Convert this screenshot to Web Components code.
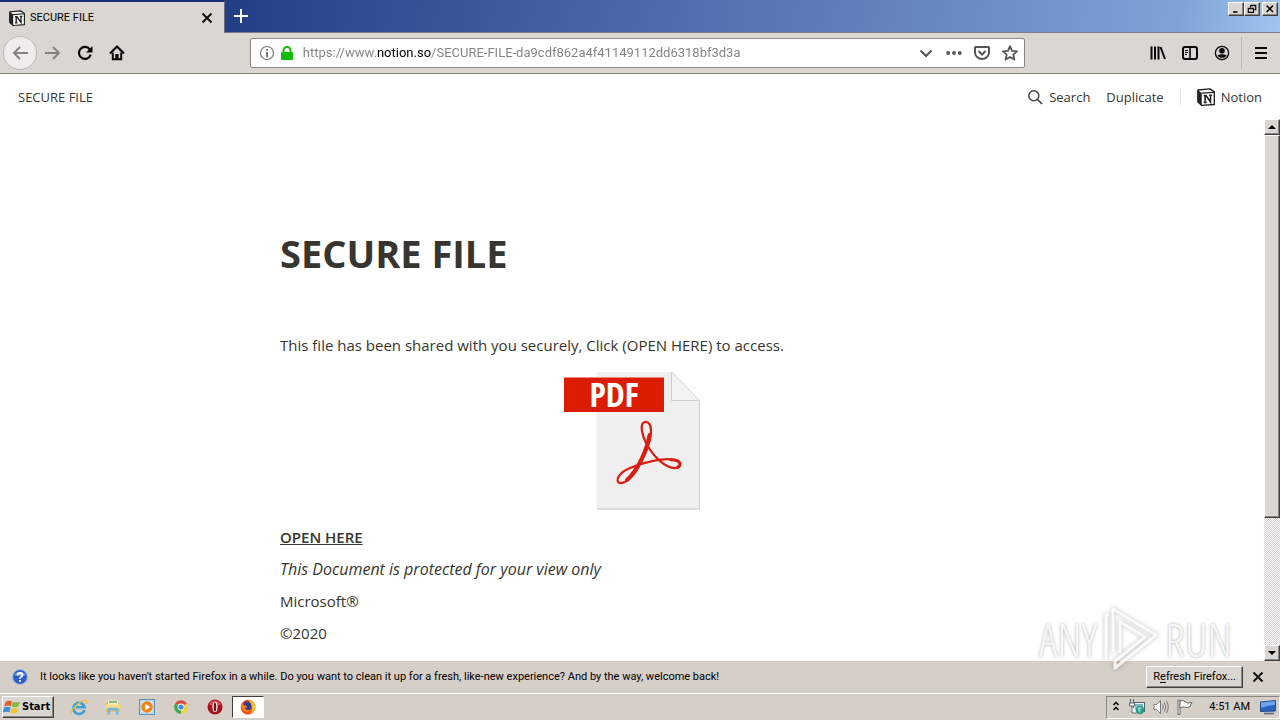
<!DOCTYPE html>
<html lang="en">
<head>
<meta charset="utf-8">
<title>SECURE FILE</title>
<style>
  html, body { height: 100%; }
  body {
    margin: 0;
    display: flex;
    flex-direction: column;
    overflow: hidden;
    background: #fff;
    color: #000;
    --face: #dad6d1;
    --ui: Roboto, "Liberation Sans", sans-serif;
    --page: "Open Sans", "Noto Sans", sans-serif;
    font: 11px/16px var(--ui);
  }
  notion-page { flex: 1; min-height: 0; }
</style>
</head>
<body>
<tab-strip>SECURE FILE</tab-strip>
<browser-toolbar></browser-toolbar>
<notion-topbar>SECURE FILE</notion-topbar>
<notion-page>
  <span slot="title">SECURE FILE</span>
  <span slot="intro">This file has been shared with you securely, Click (OPEN HERE) to access.</span>
  <span slot="link">OPEN HERE</span>
  <span slot="note">This Document is protected for your view only</span>
  <span slot="brand">Microsoft®</span>
  <span slot="year">©2020</span>
</notion-page>
<notice-bar>It looks like you haven't started Firefox in a while. Do you want to clean it up for a fresh, like-new experience? And by the way, welcome back!</notice-bar>
<task-bar></task-bar>
<water-mark></water-mark>

<script>
"use strict";
const ICONS = {
    notion: `<path d="M.7 1.8 11.5 .8 15.4 3.4V14.7L4.2 15.5.7 12.2Z" fill="#fff" stroke="#222" stroke-width="1.2" stroke-linejoin="round"/><path d="M.7 1.8 4.2 4.6V15.5L.7 12.2Z" fill="#222"/><path d="M4 4.6 15.4 3.8" stroke="#222" stroke-width="1.1"/><path d="M7.2 12.8V6.8M6 6.8H8L12 12.5V6.5M10.8 6.4H13.4M6 12.9H8.5" fill="none" stroke="#222" stroke-width="1.4"/>`,
    close: `<path d="M3.5 3.5 12.5 12.5M12.5 3.5 3.5 12.5" stroke="#111" stroke-width="2" fill="none"/>`,
    plus: `<path d="M8 0V16M0 8H16" stroke="#fff" stroke-width="2.2"/>`,
    back: `<path d="M8 2 2 8 8 14M2.5 8H16" fill="none" stroke="#85827f" stroke-width="2"/>`,
    forward: `<path d="M8 2 14 8 8 14M0 8H13.5" fill="none" stroke="#85827f" stroke-width="2"/>`,
    reload: `<path d="M12.8 4.3A6 6 0 1 0 13.7 9.6" fill="none" stroke="#0a0a0a" stroke-width="2.2"/><path d="M15.5 1V7.5H9Z" fill="#0a0a0a"/>`,
    home: `<path d="M1 8.5 8 1.5 15 8.5" fill="none" stroke="#0a0a0a" stroke-width="2.2" stroke-linejoin="round"/><path d="M3.8 7.5V14.2H12.2V7.5" fill="none" stroke="#0a0a0a" stroke-width="2"/><path d="M6.3 9H9.7V14H6.3Z" fill="#0a0a0a"/>`,
    info: `<circle cx="8" cy="8" r="6.5" fill="none" stroke="#777" stroke-width="1.2"/><path d="M8 7V12M8 4V5.8" stroke="#666" stroke-width="1.8"/>`,
    lock: `<path d="M4.5 8V5.5a3.5 3.5 0 0 1 7 0V8" fill="none" stroke="#12bc00" stroke-width="2"/><rect x="2" y="7" width="12" height="8" rx="1" fill="#12bc00"/>`,
    chevron: `<path d="M2.5 5.5 8 11 13.5 5.5" fill="none" stroke="#555" stroke-width="2"/>`,
    dots: `<circle cx="2.2" cy="8" r="1.9" fill="#555"/><circle cx="8" cy="8" r="1.9" fill="#555"/><circle cx="13.8" cy="8" r="1.9" fill="#555"/>`,
    pocket: `<path d="M1.5 2H14.5Q15 2 15 2.5V7.5A7 6.5 0 0 1 1 7.5V2.5Q1 2 1.5 2Z" fill="none" stroke="#555" stroke-width="2"/><path d="M4.5 6 8 9.5 11.5 6" fill="none" stroke="#555" stroke-width="2"/>`,
    star: `<path d="M8 1.2 10 5.8 15 6.3 11.3 9.6 12.4 14.6 8 12 3.6 14.6 4.7 9.6 1 6.3 6 5.8Z" fill="none" stroke="#555" stroke-width="1.8" stroke-linejoin="round"/>`,
    library: `<path d="M1.5 1.5V14.5M5 1.5V14.5M8.5 1.5V14.5M10.5 2 15 14" stroke="#0a0a0a" stroke-width="2" fill="none"/>`,
    sidebar: `<rect x="1" y="2" width="14" height="12" rx="2" fill="none" stroke="#0a0a0a" stroke-width="2"/><path d="M8 2V14" stroke="#0a0a0a" stroke-width="1.6"/><path d="M3 5.5H6M3 7.5H6M3 9.5H5" stroke="#0a0a0a"/>`,
    account: `<circle cx="8" cy="8" r="6.6" fill="none" stroke="#0a0a0a" stroke-width="1.3"/><circle cx="8" cy="5.8" r="2.8" fill="#0a0a0a"/><path d="M3.5 10.2Q8 8.5 12.5 10.2 11.5 12.8 8 12.8 4.5 12.8 3.5 10.2Z" fill="#0a0a0a"/>`,
    menu: `<path d="M2 3H14M2 8H14M2 13H14" stroke="#0a0a0a" stroke-width="2"/>`,
    search: `<circle cx="6.8" cy="6.8" r="5" fill="none" stroke="#444" stroke-width="1.5"/><path d="M10.5 10.5 15 15" stroke="#444" stroke-width="1.7"/>`,
    help: `<circle cx="8" cy="8" r="7.3" fill="#2c5fc9" stroke="#8fa9dc"/><path d="M2.5 6A6 5 0 0 1 13.5 6Q8 8 2.5 6Z" fill="#7fa4ea"/><path d="M5.6 6.3Q5.6 4 8 4T10.4 6.2Q10.4 7.4 9 8 8 8.5 8 9.7M8 11V12.7" fill="none" stroke="#fff" stroke-width="1.8"/>`,
    flag: `<path d="M1.5 3Q5 .8 8 2.5L6.8 7.3Q4 5.8.3 7.6Z" fill="#e8592a"/><path d="M9 2.8Q12 4.5 15.8 2.5L14.5 7.5Q11 9 7.8 7.5Z" fill="#82b83c"/><path d="M0 8.6Q3.5 6.8 6.5 8.5L5.3 13.3Q2.5 12-1.2 13.5Z" fill="#3f8ed8"/><path d="M7.5 8.8Q11 10.5 14.2 8.7L13 13.5Q9.5 15.5 6.3 13.6Z" fill="#f8c22a"/>`,
    ie: `<path d="M13.5 11A5.6 5.6 0 1 1 13.6 8.3H5" fill="none" stroke="#3a9fdc" stroke-width="2.6"/><path d="M.8 14.5C-1 11 9 1.5 14.8 1.4 16 2 15.5 4 14.8 5" fill="none" stroke="#e9bd3d" stroke-width="1.3"/>`,
    folder: `<path d="M.5 3H6L7 4.5H15.5V13H.5Z" fill="#e8c766"/><path d="M3 1.5H13V7H3Z" fill="#f8f3d4"/><path d="M4 3H12" stroke="#63a95c" stroke-width="1.5"/><path d="M.5 5.5H15.5V9.5H.5Z" fill="#f5dc87"/><path d="M2.5 15.5V10Q2.5 8.5 8 8.5T13.5 10V15.5H10.8V11.5H5.2V15.5Z" fill="#73b6dc"/>`,
    media: `<rect x=".5" y=".5" width="15" height="15" fill="#b8d6ec" stroke="#5d93c0"/><rect x="2.5" y="2.5" width="11" height="11" fill="#dcebf5"/><circle cx="8" cy="8" r="5.8" fill="#f08518"/><path d="M6.3 4.8 11.3 8 6.3 11.2Z" fill="#fff"/>`,
    chrome: `<path d="M8 8 2.1 4.6A6.8 6.8 0 0 1 13.9 4.6Z" fill="#dd4b3e"/><path d="M8 8 13.9 4.6A6.8 6.8 0 0 1 8 14.8Z" fill="#f7cf3c"/><path d="M8 8V14.8A6.8 6.8 0 0 1 2.1 4.6Z" fill="#3fa655"/><circle cx="8" cy="8" r="3.4" fill="#fff"/><circle cx="8" cy="8" r="2.6" fill="#4389e8"/>`,
    opera: `<circle cx="8" cy="8" r="7.5" fill="#a81119"/><path d="M2 5.5A6.5 6.5 0 0 1 14 5.5Q8 8 2 5.5Z" fill="#d64a4e"/><ellipse cx="8" cy="8" rx="2.6" ry="5.2" fill="#f6e5e5"/><ellipse cx="8" cy="8" rx="1.2" ry="4.5" fill="#771016"/>`,
    firefox: `<circle cx="8" cy="8.2" r="7.4" fill="#f0501f"/><path d="M8 1Q14 1 15.2 7.5 15.4 13 10 15 13 11 11.5 6.5 11 3 8 1Z" fill="#f9bf26"/><path d="M3.5 4Q6 1.5 9 3 12 5 11.3 9 10 12 7 11 4 10 5 7.5Q3.5 6 3.5 4Z" fill="#363c98"/><path d="M1 4.5Q2 5.8 5 6.2L7.5 8 4.7 9.2Q6.5 11.8 10.5 10.8 8.5 14 4.5 12.5 0 10 1 4.5Z" fill="#f58220"/>`,
    expand: `<path d="M5.5 6 8 3.5 10.5 6M5.5 11 8 8.5 10.5 11" fill="none" stroke="#111" stroke-width="1.6"/>`,
    network: `<rect x="4.5" y="3.5" width="11" height="9" fill="#eaf3f4" stroke="#4d6668"/><path d="M6 5H14V11H6Z" fill="#7cb7c3"/><path d="M1.5 0V4M4.5 0V4M.5 4H5.5V7H.5ZM3 7V14H8" fill="#fff" stroke="#59696a"/><circle cx="11" cy="11" r="4.3" fill="#2c9c8d"/><path d="M8.5 9Q11 7 13 9L11 11 12 13.5Q9 13 8.5 9Z" fill="#8ed5c2"/>`,
    sound: `<path d="M1 5.5H3.5L7.5 1.5V14.5L3.5 10.5H1Z" fill="#fff" stroke="#777"/><path d="M9.5 5.5Q11 8 9.5 10.5M11.5 3.5Q14 8 11.5 12.5M13.5 2Q17 8 13.5 14" fill="none" stroke="#777"/>`,
    pennant: `<path d="M1 1H3V15.5H1Z" fill="#fff" stroke="#666"/><path d="M3 2Q6 .5 8.5 3 11 5 15 3.5L13 7.5Q10 9.5 7.5 8 5 7.5 3 9Z" fill="#fff" stroke="#666"/>`,
    screen: `<path d="M.5 3 15.5 1.5V12L.5 12.5Z" fill="#2b62c0" stroke="#224b91"/><path d="M1 3.5 15 2V6Q8 6 1 9Z" fill="#6ea5ea"/><path d="M4 14.5H14" stroke="#526a90" stroke-width="1.6"/>`,
    minimize: `<path d="M4 12H10" stroke="#000" stroke-width="2"/>`,
    restore: `<path d="M6 3H13V9H11M6 3V6M6 3.5H13" fill="none" stroke="#000" stroke-width="1.5"/><path d="M3 7H10V12.5H3ZM3 7.5H10" fill="none" stroke="#000" stroke-width="1.5"/>`,
    shut: `<path d="M3.5 3.5 12 12M12 3.5 3.5 12" stroke="#000" stroke-width="2"/>`,
    up: `<path d="M4 10 8 6 12 10Z" fill="#000"/>`,
    down: `<path d="M4 6 8 10 12 6Z" fill="#000"/>`,
};

// shared look for every button, and the Windows bevel
const BASE = `
  *, :host { box-sizing: border-box; }
  button {
    display: flex;
    align-items: center;
    justify-content: center;
    margin: 0;
    padding: 0;
    border: 0;
    background: none;
    color: inherit;
    font: inherit;
  }
  .raised {
    background: var(--face);
    border: 1px solid;
    border-color: #fff #404040 #404040 #fff;
    box-shadow: inset -1px -1px 0 #8a8680;
  }
`;

function define(name, html) {
    const template = document.createElement("template");
    template.innerHTML = html;
    customElements.define(name, class extends HTMLElement {
        constructor() {
            super();
            this.attachShadow({ mode: "open" });
            this.shadowRoot.append(template.content.cloneNode(true));
        }
    });
}

class UiIcon extends HTMLElement {
    static observedAttributes = ["name"];
    constructor() {
        super();
        this.attachShadow({ mode: "open" });
    }
    attributeChangedCallback(name, oldValue, newValue) {
        this.shadowRoot.innerHTML = `
<style>
  :host { display: block; flex: none; width: 16px; height: 16px; }
  svg { display: block; width: 100%; height: 100%; overflow: visible; }
</style>
<svg viewBox="0 0 16 16" aria-hidden="true">${ICONS[newValue]}</svg>`;
    }
}
customElements.define("ui-icon", UiIcon);

define("tab-strip", `
<style>
  ${BASE}
  :host {
    display: flex;
    align-items: flex-start;
    height: 33px;
    background: linear-gradient(100deg, #0e2a70 0%, #25418a 20%, #5470b0 55%, #6a8ac4 75%, #7ea3d6 92%, #a0c6ee 100%);
    border-bottom: 1px solid #7d7f86;
  }
  .tab {
    display: flex;
    align-items: center;
    gap: 5px;
    width: 225px;
    height: 33px;
    padding: 0 9px;
    border-top: 2px solid #14306f;
    border-right: 1px solid #6b6f7c;
    background: var(--face);
  }
  .tab span { flex: 1; }
  .new { width: 32px; height: 32px; }
  .new ui-icon { width: 14px; height: 14px; }
  .controls { display: flex; margin: 2px 2px 0 auto; }
  .controls button { width: 16px; height: 14px; }
  .controls ui-icon { width: 12px; height: 12px; }
  .controls button:last-child { margin-left: 2px; }
</style>
<div class="tab">
  <ui-icon name="notion"></ui-icon>
  <span><slot></slot></span>
  <button aria-label="Close tab"><ui-icon name="close"></ui-icon></button>
</div>
<button class="new" aria-label="New tab"><ui-icon name="plus"></ui-icon></button>
<div class="controls">
  <button class="raised" aria-label="Minimize"><ui-icon name="minimize"></ui-icon></button>
  <button class="raised" aria-label="Restore"><ui-icon name="restore"></ui-icon></button>
  <button class="raised" aria-label="Close"><ui-icon name="shut"></ui-icon></button>
</div>
`);

define("browser-toolbar", `
<style>
  ${BASE}
  :host {
    display: flex;
    align-items: center;
    height: 41px;
    padding: 0 3px;
    background: var(--face);
    border-bottom: 1px solid #85827e;
  }
  button { width: 32px; height: 32px; flex: none; }
  .back {
    width: 34px;
    height: 34px;
    border: 1px solid #bcb9b4;
    border-radius: 50%;
    background: #efedeb;
  }
  .space { flex: 2; }
  .url {
    flex: 13;
    display: flex;
    align-items: center;
    gap: 4px;
    height: 30px;
    padding: 0 6px 0 8px;
    background: #fff;
    border: 1px solid #8b8883;
    border-radius: 2px;
  }
  .url button { width: 16px; }
  .actions { display: flex; gap: 12px; }
  /* the gradient darkens only the host name */
  input {
    flex: 1;
    min-width: 0;
    margin: 0 0 0 4px;
    padding: 0;
    border: 0;
    outline: 0;
    font: 13px/20px var(--ui);
    color: #000;
    background: linear-gradient(90deg, #808080 74px, #000 74px, #000 128px, #808080 128px);
    -webkit-background-clip: text;
    background-clip: text;
    -webkit-text-fill-color: transparent;
  }
  .line { width: 1px; height: 32px; margin: 0 3px; background: #bdb9b4; }
</style>
<button class="back" aria-label="Back"><ui-icon name="back"></ui-icon></button>
<button aria-label="Forward"><ui-icon name="forward"></ui-icon></button>
<button aria-label="Reload"><ui-icon name="reload"></ui-icon></button>
<button aria-label="Home"><ui-icon name="home"></ui-icon></button>
<div class="space"></div>
<div class="url">
  <ui-icon name="info"></ui-icon>
  <ui-icon name="lock"></ui-icon>
  <input aria-label="Address" spellcheck="false" value="https://www.notion.so/SECURE-FILE-da9cdf862a4f41149112dd6318bf3d3a">
  <div class="actions">
    <button aria-label="History"><ui-icon name="chevron"></ui-icon></button>
    <button aria-label="Page actions"><ui-icon name="dots"></ui-icon></button>
    <button aria-label="Save to Pocket"><ui-icon name="pocket"></ui-icon></button>
    <button aria-label="Bookmark"><ui-icon name="star"></ui-icon></button>
  </div>
</div>
<div class="space"></div>
<button aria-label="Library"><ui-icon name="library"></ui-icon></button>
<button aria-label="Sidebars"><ui-icon name="sidebar"></ui-icon></button>
<button aria-label="Account"><ui-icon name="account"></ui-icon></button>
<div class="line"></div>
<button aria-label="Menu"><ui-icon name="menu"></ui-icon></button>
`);

define("notion-topbar", `
<style>
  ${BASE}
  :host {
    display: flex;
    align-items: center;
    justify-content: space-between;
    height: 45px;
    padding: 0 18px;
    font: 13px/20px var(--page);
    color: #37352f;
  }
  nav { display: flex; align-items: center; gap: 16px; }
  button { gap: 6px; }
  .line { width: 1px; height: 16px; background: #e2e2e0; }
  .big { width: 18px; height: 18px; }
</style>
<span><slot></slot></span>
<nav>
  <button><ui-icon name="search"></ui-icon>Search</button>
  <button>Duplicate</button>
  <div class="line"></div>
  <button><ui-icon class="big" name="notion"></ui-icon>Notion</button>
</nav>
`);

define("win-scrollbar", `
<style>
  ${BASE}
  :host { display: flex; flex-direction: column; width: 16px; }
  button { height: 16px; flex: none; }
  .track {
    flex: 1;
    background: repeating-conic-gradient(#fff 0 25%, #d6d2cc 0 50%) 0 0 / 2px 2px;
  }
  .thumb { height: 75%; }
</style>
<button class="raised" aria-label="Scroll up"><ui-icon name="up"></ui-icon></button>
<div class="track"><div class="thumb raised"></div></div>
<button class="raised" aria-label="Scroll down"><ui-icon name="down"></ui-icon></button>
`);

define("pdf-picture", `
<style>
  :host { display: block; width: 136px; height: 140px; }
  svg { display: block; width: 100%; height: 100%; }
  text { font: bold 34px "Open Sans Condensed", "Liberation Sans Narrow", "DejaVu Sans Condensed", sans-serif; }
</style>
<svg viewBox="0 0 136 140" role="img" aria-label="PDF file">
  <path d="M32.5 1H107.5L135.5 29.5V138.5H32.5Z" fill="#f0f0f0"/>
  <path d="M33 138H135.5V29.5" fill="none" stroke="#d3d3d3" stroke-width="1.5"/>
  <path d="M107.5 1V29.5H135.5Z" fill="#f4f4f4" stroke="#cfcfcf"/>
  <rect x="0" y="6.5" width="100" height="34.5" fill="#dc1c00"/>
  <text x="50" y="36" text-anchor="middle" fill="#fff">PDF</text>
  <path d="M87 60C87 70 81 84 75 95C68 108 60 113 55.5 112C51 110 54 102 66 97C80 91 100 87 108 88.5C118 90 118 96.5 112 97C102 98 90 86 83 74C78 65 75 52 81 51C85 50.5 87 54 87 60Z" fill="none" stroke="#dc1c10" stroke-width="2.2"/>
  <path d="M85.5 64C83 79 74 99 63 109" fill="none" stroke="#dc1c10" stroke-width="4" stroke-linecap="round"/>
  <path d="M107 88.7C115 88.5 119 93 113.5 96.2" fill="none" stroke="#dc1c10" stroke-width="3" stroke-linecap="round"/>
</svg>
`);

define("notion-page", `
<style>
  ${BASE}
  :host {
    display: flex;
    color: #37352f;
    font: 15px/24px var(--page);
  }
  main { flex: 1; min-width: 0; overflow: hidden; }
  article { max-width: 704px; margin: 0 auto; padding-top: 110px; }
  h1 { margin: 0 0 56px; font: bold 38px/48px var(--page); }
  p { margin: 0 0 8px; }
  pdf-picture { margin: 14px auto; }
  a { color: inherit; font-weight: 600; }
  em { font-size: 16px; }
</style>
<main>
  <article>
    <h1><slot name="title"></slot></h1>
    <p><slot name="intro"></slot></p>
    <pdf-picture></pdf-picture>
    <p><a href="#open"><slot name="link"></slot></a></p>
    <p><em><slot name="note"></slot></em></p>
    <p><slot name="brand"></slot></p>
    <p><slot name="year"></slot></p>
  </article>
</main>
<win-scrollbar></win-scrollbar>
`);

define("notice-bar", `
<style>
  ${BASE}
  :host {
    display: flex;
    align-items: center;
    gap: 7px;
    height: 32px;
    padding: 0 14px 0 12px;
    background: #d6cfc8;
  }
  p { flex: 1; margin: 0; padding-left: 5px; white-space: nowrap; }
  .refresh { height: 22px; padding: 0 6px; }
  .refresh u { text-underline-offset: 2px; }
</style>
<ui-icon name="help"></ui-icon>
<p><slot></slot></p>
<button class="raised refresh"><span>R<u>e</u>fresh Firefox...</span></button>
<button aria-label="Dismiss"><ui-icon name="close"></ui-icon></button>
`);

define("task-bar", `
<style>
  ${BASE}
  :host {
    display: flex;
    align-items: center;
    height: 27px;
    padding: 0 0 0 2px;
    background: #d6cfc8;
    border-top: 1px solid #fff;
  }
  .start {
    gap: 2px;
    height: 22px;
    padding: 0 3px 0 1px;
    font-family: "DejaVu Sans Condensed", sans-serif;
    font-weight: bold;
  }
  .apps { display: flex; margin-left: 8px; }
  .apps button { width: 34px; height: 22px; }
  .apps .active {
    width: 32px;
    background: #fff;
    border: 1px solid;
    border-color: #404040 #fff #fff #404040;
  }
  .tray {
    display: flex;
    align-items: center;
    gap: 8px;
    height: 23px;
    margin-left: auto;
    padding: 0 3px 0 1px;
    border: 1px solid;
    border-color: #8a8680 #fff #fff #8a8680;
  }
  .tray ui-icon:first-child { margin-right: -3px; }
  time { margin: 0 2px 0 8px; }
</style>
<button class="raised start"><ui-icon name="flag"></ui-icon>Start</button>
<div class="apps">
  <button aria-label="Internet Explorer"><ui-icon name="ie"></ui-icon></button>
  <button aria-label="Explorer"><ui-icon name="folder"></ui-icon></button>
  <button aria-label="Media Player"><ui-icon name="media"></ui-icon></button>
  <button aria-label="Chrome"><ui-icon name="chrome"></ui-icon></button>
  <button aria-label="Opera"><ui-icon name="opera"></ui-icon></button>
  <button class="active" aria-label="Firefox"><ui-icon name="firefox"></ui-icon></button>
</div>
<div class="tray">
  <ui-icon name="expand"></ui-icon>
  <ui-icon name="network"></ui-icon>
  <ui-icon name="sound"></ui-icon>
  <ui-icon name="pennant"></ui-icon>
  <time>4:51 AM</time>
  <ui-icon name="screen"></ui-icon>
</div>
`);

// floats over the bottom right corner of the window
define("water-mark", `
<style>
  :host {
    position: absolute;
    right: 48px;
    bottom: 48px;
    display: flex;
    align-items: center;
    gap: 6px;
    pointer-events: none;
    color: rgba(255, 255, 255, .9);
    font: 300 46px/46px "Open Sans Condensed Light", "Open Sans Condensed", "Liberation Sans Narrow", sans-serif;
    text-shadow: 0 0 3px rgba(0, 0, 0, .35);
  }
  svg { display: block; width: 56px; height: 66px; filter: drop-shadow(0 0 2px rgba(0, 0, 0, .3)); }
</style>
<span>ANY</span>
<svg viewBox="0 0 56 66" aria-hidden="true">
  <path d="M10 46V3L53 29 12 62V55L42 31 17 16V47M3 54V9H6" fill="none" stroke="#fff" stroke-opacity=".85" stroke-width="3" stroke-linejoin="round"/>
</svg>
<span>RUN</span>
`);
</script>
</body>
</html>
